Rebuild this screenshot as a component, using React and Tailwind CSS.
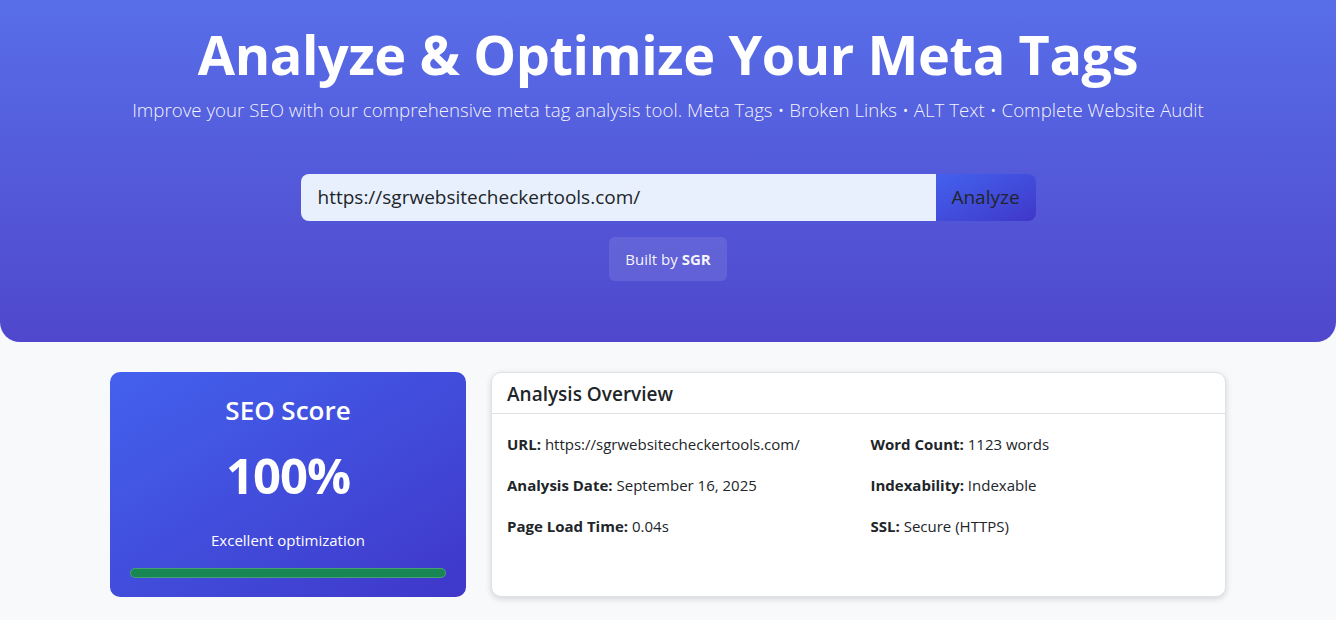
export default function App() {
  return (
    <div className="min-h-screen bg-[#f8f9fa] font-['Open_Sans',_'Noto_Sans',_sans-serif]">
      <header className="h-[342px] rounded-b-[20px] bg-gradient-to-b from-[#586ee9] to-[#4f47cc] flex flex-col items-center pt-[22px]">
        <h1 className="text-[54px] leading-[64px] font-bold text-white tracking-[-0.4px]">
          Analyze &amp; Optimize Your Meta Tags
        </h1>
        <p className="mt-[10px] text-[18.7px] leading-[28px] font-light text-white/95">
          Improve your SEO with our comprehensive meta tag analysis tool. Meta Tags • Broken Links • ALT Text • Complete Website Audit
        </p>
        <div className="mt-[50px] flex w-[735px] h-[47px]">
          <div className="flex-1 bg-[#e8f0fe] rounded-l-[8px] flex items-center px-[17px] text-[19px] text-[#212529]">
            https://sgrwebsitecheckertools.com/
          </div>
          <div className="w-[100px] rounded-r-[8px] bg-gradient-to-br from-[#4361ee] to-[#3f37c9] flex items-center justify-center text-[19px] text-[#212529]">
            Analyze
          </div>
        </div>
        <div className="mt-[16px] h-[44px] px-[16px] rounded-[6px] bg-white/10 flex items-center text-[15px] text-white/95">
          Built by&nbsp;<span className="font-bold">SGR</span>
        </div>
      </header>
      <main className="w-[1116px] mx-auto mt-[30px] flex gap-[25px]">
        <div className="w-[356px] h-[225px] rounded-[10px] bg-gradient-to-br from-[#4361ee] to-[#3f37c9] flex flex-col items-center px-[20px] pt-[20px] text-white">
          <div className="text-[26px] leading-[36px] font-semibold">SEO Score</div>
          <div className="mt-[18px] text-[49px] leading-[58px] font-bold tracking-[-1px]">100%</div>
          <div className="mt-[24px] text-[15px] leading-[24px]">Excellent optimization</div>
          <div className="mt-[16px] w-full h-[10px] rounded-full bg-[#198754] border border-white/20"></div>
        </div>
        <div className="flex-1 h-[225px] rounded-[10px] bg-white border border-[#dee2e6] shadow-[0_2px_6px_rgba(0,0,0,0.15)] flex flex-col">
          <div className="h-[41px] border-b border-[#dee2e6] px-[15px] pt-[3px] flex items-center text-[19px] font-semibold text-[#212529]">
            Analysis Overview
          </div>
          <div className="px-[15px] pt-[18px] grid grid-cols-2 gap-x-[24px] gap-y-[17px] text-[15px] leading-[24px] text-[#212529]">
            <div><span className="font-bold">URL:</span> https://sgrwebsitecheckertools.com/</div>
            <div><span className="font-bold">Word Count:</span> 1123 words</div>
            <div><span className="font-bold">Analysis Date:</span> September 16, 2025</div>
            <div><span className="font-bold">Indexability:</span> Indexable</div>
            <div><span className="font-bold">Page Load Time:</span> 0.04s</div>
            <div><span className="font-bold">SSL:</span> Secure (HTTPS)</div>
          </div>
        </div>
      </main>
    </div>
  );
}
